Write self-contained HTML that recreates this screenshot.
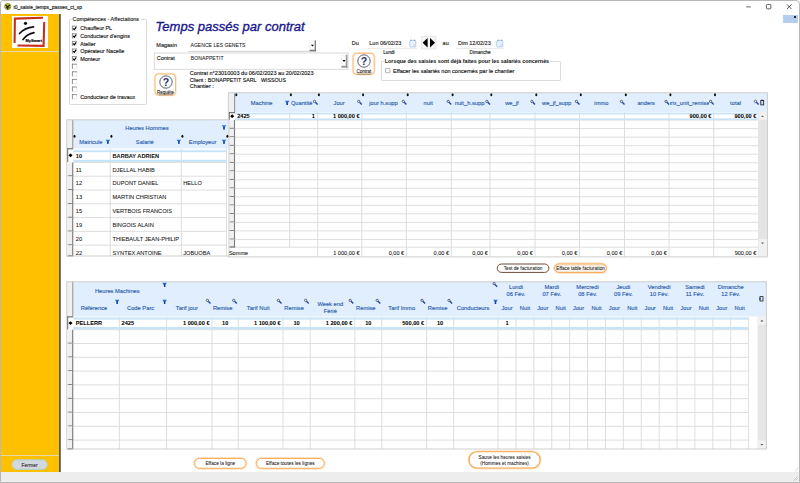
<!DOCTYPE html>
<html lang="fr"><head><meta charset="utf-8"><title>t0_saisie_temps_passes_ct_sp</title>
<style>
html,body{margin:0;padding:0;}
body{width:800px;height:483px;position:relative;overflow:hidden;background:#fff;font-family:"Liberation Sans", sans-serif;}
.b{position:absolute;box-sizing:content-box;}
.t{position:absolute;white-space:nowrap;font-family:"Liberation Sans", sans-serif;-webkit-text-stroke:0.13px;}
#grid{position:absolute;left:0;top:0;}
</style></head><body>
<div class="b" style="left:0px;top:0px;width:800px;height:14px;background:#fff;"></div>
<div class="b" style="left:1px;top:14px;width:58px;height:458px;background:#ffc000;"></div>
<div class="b" style="left:1px;top:51px;width:58px;height:1px;background:#e6d9a8;"></div>
<div class="b" style="left:1px;top:455px;width:58px;height:1px;background:#e6d9a8;"></div>
<div class="b" style="left:0px;top:472px;width:800px;height:11px;background:#ededed;"></div>
<div class="b" style="left:0;top:0;width:798px;height:481px;border:1px solid #b8b8b8;border-radius:3px 4px 0 0;"></div>
<svg id="grid" width="800" height="483" viewBox="0 0 800 483">
<rect x="59.10" y="14.00" width="1.60" height="458.00" fill="#45454d"/>
<rect x="12.0" y="459.8" width="35.2" height="9.6" rx="4.8" fill="#d3d7df" stroke="#9fd6e0" stroke-width="0.8"/>
<rect x="72.00" y="25.80" width="5.00" height="5.00" fill="#fff"/>
<line x1="72.00" y1="30.45" x2="77.00" y2="30.45" stroke="#e2e2e2" stroke-width="0.7"/>
<line x1="76.65" y1="25.80" x2="76.65" y2="30.80" stroke="#e2e2e2" stroke-width="0.7"/>
<line x1="72.00" y1="26.20" x2="77.00" y2="26.20" stroke="#7a7a7a" stroke-width="0.8"/>
<line x1="72.40" y1="25.80" x2="72.40" y2="30.80" stroke="#7a7a7a" stroke-width="0.8"/>
<path d="M73.20 28.30 L74.30 29.60 L76.20 27.10" stroke="#000" stroke-width="1.2" fill="none"/>
<rect x="72.00" y="33.40" width="5.00" height="5.00" fill="#fff"/>
<line x1="72.00" y1="38.05" x2="77.00" y2="38.05" stroke="#e2e2e2" stroke-width="0.7"/>
<line x1="76.65" y1="33.40" x2="76.65" y2="38.40" stroke="#e2e2e2" stroke-width="0.7"/>
<line x1="72.00" y1="33.80" x2="77.00" y2="33.80" stroke="#7a7a7a" stroke-width="0.8"/>
<line x1="72.40" y1="33.40" x2="72.40" y2="38.40" stroke="#7a7a7a" stroke-width="0.8"/>
<path d="M73.20 35.90 L74.30 37.20 L76.20 34.70" stroke="#000" stroke-width="1.2" fill="none"/>
<rect x="72.00" y="41.00" width="5.00" height="5.00" fill="#fff"/>
<line x1="72.00" y1="45.65" x2="77.00" y2="45.65" stroke="#e2e2e2" stroke-width="0.7"/>
<line x1="76.65" y1="41.00" x2="76.65" y2="46.00" stroke="#e2e2e2" stroke-width="0.7"/>
<line x1="72.00" y1="41.40" x2="77.00" y2="41.40" stroke="#7a7a7a" stroke-width="0.8"/>
<line x1="72.40" y1="41.00" x2="72.40" y2="46.00" stroke="#7a7a7a" stroke-width="0.8"/>
<path d="M73.20 43.50 L74.30 44.80 L76.20 42.30" stroke="#000" stroke-width="1.2" fill="none"/>
<rect x="72.00" y="48.60" width="5.00" height="5.00" fill="#fff"/>
<line x1="72.00" y1="53.25" x2="77.00" y2="53.25" stroke="#e2e2e2" stroke-width="0.7"/>
<line x1="76.65" y1="48.60" x2="76.65" y2="53.60" stroke="#e2e2e2" stroke-width="0.7"/>
<line x1="72.00" y1="49.00" x2="77.00" y2="49.00" stroke="#7a7a7a" stroke-width="0.8"/>
<line x1="72.40" y1="48.60" x2="72.40" y2="53.60" stroke="#7a7a7a" stroke-width="0.8"/>
<path d="M73.20 51.10 L74.30 52.40 L76.20 49.90" stroke="#000" stroke-width="1.2" fill="none"/>
<rect x="72.00" y="56.20" width="5.00" height="5.00" fill="#fff"/>
<line x1="72.00" y1="60.85" x2="77.00" y2="60.85" stroke="#e2e2e2" stroke-width="0.7"/>
<line x1="76.65" y1="56.20" x2="76.65" y2="61.20" stroke="#e2e2e2" stroke-width="0.7"/>
<line x1="72.00" y1="56.60" x2="77.00" y2="56.60" stroke="#7a7a7a" stroke-width="0.8"/>
<line x1="72.40" y1="56.20" x2="72.40" y2="61.20" stroke="#7a7a7a" stroke-width="0.8"/>
<path d="M73.20 58.70 L74.30 60.00 L76.20 57.50" stroke="#000" stroke-width="1.2" fill="none"/>
<rect x="72.00" y="63.80" width="5.00" height="5.00" fill="#fff"/>
<line x1="72.00" y1="68.45" x2="77.00" y2="68.45" stroke="#e2e2e2" stroke-width="0.7"/>
<line x1="76.65" y1="63.80" x2="76.65" y2="68.80" stroke="#e2e2e2" stroke-width="0.7"/>
<line x1="72.00" y1="64.20" x2="77.00" y2="64.20" stroke="#7a7a7a" stroke-width="0.8"/>
<line x1="72.40" y1="63.80" x2="72.40" y2="68.80" stroke="#7a7a7a" stroke-width="0.8"/>
<rect x="72.00" y="71.40" width="5.00" height="5.00" fill="#fff"/>
<line x1="72.00" y1="76.05" x2="77.00" y2="76.05" stroke="#e2e2e2" stroke-width="0.7"/>
<line x1="76.65" y1="71.40" x2="76.65" y2="76.40" stroke="#e2e2e2" stroke-width="0.7"/>
<line x1="72.00" y1="71.80" x2="77.00" y2="71.80" stroke="#7a7a7a" stroke-width="0.8"/>
<line x1="72.40" y1="71.40" x2="72.40" y2="76.40" stroke="#7a7a7a" stroke-width="0.8"/>
<rect x="72.00" y="79.00" width="5.00" height="5.00" fill="#fff"/>
<line x1="72.00" y1="83.65" x2="77.00" y2="83.65" stroke="#e2e2e2" stroke-width="0.7"/>
<line x1="76.65" y1="79.00" x2="76.65" y2="84.00" stroke="#e2e2e2" stroke-width="0.7"/>
<line x1="72.00" y1="79.40" x2="77.00" y2="79.40" stroke="#7a7a7a" stroke-width="0.8"/>
<line x1="72.40" y1="79.00" x2="72.40" y2="84.00" stroke="#7a7a7a" stroke-width="0.8"/>
<rect x="72.00" y="86.60" width="5.00" height="5.00" fill="#fff"/>
<line x1="72.00" y1="91.25" x2="77.00" y2="91.25" stroke="#e2e2e2" stroke-width="0.7"/>
<line x1="76.65" y1="86.60" x2="76.65" y2="91.60" stroke="#e2e2e2" stroke-width="0.7"/>
<line x1="72.00" y1="87.00" x2="77.00" y2="87.00" stroke="#7a7a7a" stroke-width="0.8"/>
<line x1="72.40" y1="86.60" x2="72.40" y2="91.60" stroke="#7a7a7a" stroke-width="0.8"/>
<rect x="72.00" y="94.20" width="5.00" height="5.00" fill="#fff"/>
<line x1="72.00" y1="98.85" x2="77.00" y2="98.85" stroke="#e2e2e2" stroke-width="0.7"/>
<line x1="76.65" y1="94.20" x2="76.65" y2="99.20" stroke="#e2e2e2" stroke-width="0.7"/>
<line x1="72.00" y1="94.60" x2="77.00" y2="94.60" stroke="#7a7a7a" stroke-width="0.8"/>
<line x1="72.40" y1="94.20" x2="72.40" y2="99.20" stroke="#7a7a7a" stroke-width="0.8"/>
<line x1="188.00" y1="51.40" x2="316.00" y2="51.40" stroke="#cdcdcd" stroke-width="0.9"/>
<rect x="309.60" y="40.40" width="6.20" height="10.80" fill="#fbfbfb"/>
<line x1="309.60" y1="40.70" x2="315.80" y2="40.70" stroke="#ececec" stroke-width="0.6"/>
<line x1="309.90" y1="40.40" x2="309.90" y2="51.20" stroke="#ececec" stroke-width="0.6"/>
<line x1="309.60" y1="50.70" x2="315.80" y2="50.70" stroke="#4a4a4a" stroke-width="1.0"/>
<line x1="315.35" y1="40.40" x2="315.35" y2="51.20" stroke="#5a5a5a" stroke-width="0.9"/>
<line x1="310.20" y1="49.80" x2="314.90" y2="49.80" stroke="#b8b8b8" stroke-width="0.8"/>
<line x1="314.50" y1="41.00" x2="314.50" y2="50.20" stroke="#c4c4c4" stroke-width="0.7"/>
<path d="M310.90 44.70 H313.90 L312.40 46.60 Z" fill="#000"/>
<rect x="154.30" y="53.00" width="193.70" height="16.30" fill="#fff" stroke="#d6d6d6" stroke-width="0.9"/>
<rect x="341.40" y="54.80" width="5.80" height="12.60" fill="#fbfbfb"/>
<line x1="341.40" y1="55.10" x2="347.20" y2="55.10" stroke="#ececec" stroke-width="0.6"/>
<line x1="341.70" y1="54.80" x2="341.70" y2="67.40" stroke="#ececec" stroke-width="0.6"/>
<line x1="341.40" y1="66.90" x2="347.20" y2="66.90" stroke="#4a4a4a" stroke-width="1.0"/>
<line x1="346.75" y1="54.80" x2="346.75" y2="67.40" stroke="#5a5a5a" stroke-width="0.9"/>
<line x1="342.00" y1="66.00" x2="346.30" y2="66.00" stroke="#b8b8b8" stroke-width="0.8"/>
<line x1="345.90" y1="55.40" x2="345.90" y2="66.40" stroke="#c4c4c4" stroke-width="0.7"/>
<path d="M342.50 60.00 H345.50 L344.00 61.90 Z" fill="#000"/>
<rect x="154.50" y="73.40" width="21.60" height="22.10" rx="3.8" fill="none" stroke="#fde6cc" stroke-width="1.4"/>
<rect x="155.10" y="74.00" width="20.40" height="20.90" rx="3.4" fill="#fffdfb" stroke="#f8ae5c" stroke-width="0.8"/>
<line x1="158.30" y1="94.80" x2="172.90" y2="94.80" stroke="#333" stroke-width="0.45"/>
<rect x="352.60" y="52.80" width="22.20" height="22.00" rx="3.8" fill="none" stroke="#fde6cc" stroke-width="1.4"/>
<rect x="353.20" y="53.40" width="21.00" height="20.80" rx="3.4" fill="#fffdfb" stroke="#f8ae5c" stroke-width="0.8"/>
<line x1="356.70" y1="74.10" x2="371.30" y2="74.10" stroke="#333" stroke-width="0.45"/>
<rect x="385.6" y="68.4" width="4.3" height="4.3" rx="0.6" fill="#fff" stroke="#7e7e7e" stroke-width="0.6"/>
<rect x="228.30" y="92.80" width="539.10" height="164.10" fill="#fff"/>
<rect x="235.00" y="92.80" width="532.40" height="19.40" fill="#e0eefd"/>
<line x1="235.00" y1="120.10" x2="758.60" y2="120.10" stroke="#dadada" stroke-width="0.9"/>
<line x1="235.00" y1="128.62" x2="758.60" y2="128.62" stroke="#dadada" stroke-width="0.9"/>
<line x1="235.00" y1="137.15" x2="758.60" y2="137.15" stroke="#dadada" stroke-width="0.9"/>
<line x1="235.00" y1="145.67" x2="758.60" y2="145.67" stroke="#dadada" stroke-width="0.9"/>
<line x1="235.00" y1="154.19" x2="758.60" y2="154.19" stroke="#dadada" stroke-width="0.9"/>
<line x1="235.00" y1="162.71" x2="758.60" y2="162.71" stroke="#dadada" stroke-width="0.9"/>
<line x1="235.00" y1="171.24" x2="758.60" y2="171.24" stroke="#dadada" stroke-width="0.9"/>
<line x1="235.00" y1="179.76" x2="758.60" y2="179.76" stroke="#dadada" stroke-width="0.9"/>
<line x1="235.00" y1="188.28" x2="758.60" y2="188.28" stroke="#dadada" stroke-width="0.9"/>
<line x1="235.00" y1="196.81" x2="758.60" y2="196.81" stroke="#dadada" stroke-width="0.9"/>
<line x1="235.00" y1="205.33" x2="758.60" y2="205.33" stroke="#dadada" stroke-width="0.9"/>
<line x1="235.00" y1="213.85" x2="758.60" y2="213.85" stroke="#dadada" stroke-width="0.9"/>
<line x1="235.00" y1="222.38" x2="758.60" y2="222.38" stroke="#dadada" stroke-width="0.9"/>
<line x1="235.00" y1="230.90" x2="758.60" y2="230.90" stroke="#dadada" stroke-width="0.9"/>
<line x1="235.00" y1="239.42" x2="758.60" y2="239.42" stroke="#dadada" stroke-width="0.9"/>
<line x1="235.00" y1="247.20" x2="758.60" y2="247.20" stroke="#dadada" stroke-width="0.9"/>
<line x1="289.60" y1="112.20" x2="289.60" y2="247.20" stroke="#dadada" stroke-width="0.9"/>
<line x1="317.60" y1="112.20" x2="317.60" y2="256.90" stroke="#dadada" stroke-width="0.9"/>
<line x1="361.80" y1="112.20" x2="361.80" y2="256.90" stroke="#dadada" stroke-width="0.9"/>
<line x1="406.40" y1="112.20" x2="406.40" y2="256.90" stroke="#dadada" stroke-width="0.9"/>
<line x1="451.30" y1="112.20" x2="451.30" y2="256.90" stroke="#dadada" stroke-width="0.9"/>
<line x1="490.00" y1="112.20" x2="490.00" y2="256.90" stroke="#dadada" stroke-width="0.9"/>
<line x1="535.00" y1="112.20" x2="535.00" y2="256.90" stroke="#dadada" stroke-width="0.9"/>
<line x1="579.50" y1="112.20" x2="579.50" y2="256.90" stroke="#dadada" stroke-width="0.9"/>
<line x1="624.50" y1="112.20" x2="624.50" y2="256.90" stroke="#dadada" stroke-width="0.9"/>
<line x1="669.10" y1="112.20" x2="669.10" y2="256.90" stroke="#dadada" stroke-width="0.9"/>
<line x1="713.70" y1="112.20" x2="713.70" y2="256.90" stroke="#dadada" stroke-width="0.9"/>
<line x1="758.60" y1="112.20" x2="758.60" y2="256.90" stroke="#dadada" stroke-width="0.9"/>
<rect x="235.00" y="112.70" width="523.60" height="1.70" fill="#c6e3f7"/>
<rect x="235.00" y="118.40" width="523.60" height="1.50" fill="#c6e3f7"/>
<rect x="228.30" y="92.80" width="6.70" height="19.40" fill="#f0f0f0"/>
<line x1="234.60" y1="92.80" x2="234.60" y2="112.20" stroke="#858585" stroke-width="0.9"/>
<rect x="228.70" y="112.20" width="6.30" height="7.90" fill="#fff"/>
<line x1="228.70" y1="112.70" x2="235.00" y2="112.70" stroke="#555" stroke-width="1"/>
<line x1="229.20" y1="112.20" x2="229.20" y2="120.10" stroke="#555" stroke-width="1"/>
<path d="M230.05 116.15 L232.15 114.25 L234.25 116.15 L232.15 118.05 Z" fill="#000"/>
<rect x="228.70" y="120.10" width="6.30" height="8.52" fill="#f0f0f0"/>
<line x1="228.70" y1="128.42" x2="235.00" y2="128.42" stroke="#6a6a6a" stroke-width="1.2"/>
<line x1="234.50" y1="120.10" x2="234.50" y2="128.62" stroke="#7a7a7a" stroke-width="1.1"/>
<line x1="229.10" y1="120.10" x2="229.10" y2="128.62" stroke="#fff" stroke-width="0.8"/>
<rect x="228.70" y="128.62" width="6.30" height="8.52" fill="#f0f0f0"/>
<line x1="228.70" y1="136.95" x2="235.00" y2="136.95" stroke="#6a6a6a" stroke-width="1.2"/>
<line x1="234.50" y1="128.62" x2="234.50" y2="137.15" stroke="#7a7a7a" stroke-width="1.1"/>
<line x1="229.10" y1="128.62" x2="229.10" y2="137.15" stroke="#fff" stroke-width="0.8"/>
<rect x="228.70" y="137.15" width="6.30" height="8.52" fill="#f0f0f0"/>
<line x1="228.70" y1="145.47" x2="235.00" y2="145.47" stroke="#6a6a6a" stroke-width="1.2"/>
<line x1="234.50" y1="137.15" x2="234.50" y2="145.67" stroke="#7a7a7a" stroke-width="1.1"/>
<line x1="229.10" y1="137.15" x2="229.10" y2="145.67" stroke="#fff" stroke-width="0.8"/>
<rect x="228.70" y="145.67" width="6.30" height="8.52" fill="#f0f0f0"/>
<line x1="228.70" y1="153.99" x2="235.00" y2="153.99" stroke="#6a6a6a" stroke-width="1.2"/>
<line x1="234.50" y1="145.67" x2="234.50" y2="154.19" stroke="#7a7a7a" stroke-width="1.1"/>
<line x1="229.10" y1="145.67" x2="229.10" y2="154.19" stroke="#fff" stroke-width="0.8"/>
<rect x="228.70" y="154.19" width="6.30" height="8.52" fill="#f0f0f0"/>
<line x1="228.70" y1="162.51" x2="235.00" y2="162.51" stroke="#6a6a6a" stroke-width="1.2"/>
<line x1="234.50" y1="154.19" x2="234.50" y2="162.71" stroke="#7a7a7a" stroke-width="1.1"/>
<line x1="229.10" y1="154.19" x2="229.10" y2="162.71" stroke="#fff" stroke-width="0.8"/>
<rect x="228.70" y="162.71" width="6.30" height="8.52" fill="#f0f0f0"/>
<line x1="228.70" y1="171.04" x2="235.00" y2="171.04" stroke="#6a6a6a" stroke-width="1.2"/>
<line x1="234.50" y1="162.71" x2="234.50" y2="171.24" stroke="#7a7a7a" stroke-width="1.1"/>
<line x1="229.10" y1="162.71" x2="229.10" y2="171.24" stroke="#fff" stroke-width="0.8"/>
<rect x="228.70" y="171.24" width="6.30" height="8.52" fill="#f0f0f0"/>
<line x1="228.70" y1="179.56" x2="235.00" y2="179.56" stroke="#6a6a6a" stroke-width="1.2"/>
<line x1="234.50" y1="171.24" x2="234.50" y2="179.76" stroke="#7a7a7a" stroke-width="1.1"/>
<line x1="229.10" y1="171.24" x2="229.10" y2="179.76" stroke="#fff" stroke-width="0.8"/>
<rect x="228.70" y="179.76" width="6.30" height="8.52" fill="#f0f0f0"/>
<line x1="228.70" y1="188.08" x2="235.00" y2="188.08" stroke="#6a6a6a" stroke-width="1.2"/>
<line x1="234.50" y1="179.76" x2="234.50" y2="188.28" stroke="#7a7a7a" stroke-width="1.1"/>
<line x1="229.10" y1="179.76" x2="229.10" y2="188.28" stroke="#fff" stroke-width="0.8"/>
<rect x="228.70" y="188.28" width="6.30" height="8.52" fill="#f0f0f0"/>
<line x1="228.70" y1="196.61" x2="235.00" y2="196.61" stroke="#6a6a6a" stroke-width="1.2"/>
<line x1="234.50" y1="188.28" x2="234.50" y2="196.81" stroke="#7a7a7a" stroke-width="1.1"/>
<line x1="229.10" y1="188.28" x2="229.10" y2="196.81" stroke="#fff" stroke-width="0.8"/>
<rect x="228.70" y="196.81" width="6.30" height="8.52" fill="#f0f0f0"/>
<line x1="228.70" y1="205.13" x2="235.00" y2="205.13" stroke="#6a6a6a" stroke-width="1.2"/>
<line x1="234.50" y1="196.81" x2="234.50" y2="205.33" stroke="#7a7a7a" stroke-width="1.1"/>
<line x1="229.10" y1="196.81" x2="229.10" y2="205.33" stroke="#fff" stroke-width="0.8"/>
<rect x="228.70" y="205.33" width="6.30" height="8.52" fill="#f0f0f0"/>
<line x1="228.70" y1="213.65" x2="235.00" y2="213.65" stroke="#6a6a6a" stroke-width="1.2"/>
<line x1="234.50" y1="205.33" x2="234.50" y2="213.85" stroke="#7a7a7a" stroke-width="1.1"/>
<line x1="229.10" y1="205.33" x2="229.10" y2="213.85" stroke="#fff" stroke-width="0.8"/>
<rect x="228.70" y="213.85" width="6.30" height="8.52" fill="#f0f0f0"/>
<line x1="228.70" y1="222.18" x2="235.00" y2="222.18" stroke="#6a6a6a" stroke-width="1.2"/>
<line x1="234.50" y1="213.85" x2="234.50" y2="222.38" stroke="#7a7a7a" stroke-width="1.1"/>
<line x1="229.10" y1="213.85" x2="229.10" y2="222.38" stroke="#fff" stroke-width="0.8"/>
<rect x="228.70" y="222.38" width="6.30" height="8.52" fill="#f0f0f0"/>
<line x1="228.70" y1="230.70" x2="235.00" y2="230.70" stroke="#6a6a6a" stroke-width="1.2"/>
<line x1="234.50" y1="222.38" x2="234.50" y2="230.90" stroke="#7a7a7a" stroke-width="1.1"/>
<line x1="229.10" y1="222.38" x2="229.10" y2="230.90" stroke="#fff" stroke-width="0.8"/>
<rect x="228.70" y="230.90" width="6.30" height="8.52" fill="#f0f0f0"/>
<line x1="228.70" y1="239.22" x2="235.00" y2="239.22" stroke="#6a6a6a" stroke-width="1.2"/>
<line x1="234.50" y1="230.90" x2="234.50" y2="239.42" stroke="#7a7a7a" stroke-width="1.1"/>
<line x1="229.10" y1="230.90" x2="229.10" y2="239.42" stroke="#fff" stroke-width="0.8"/>
<rect x="228.70" y="239.42" width="6.30" height="7.78" fill="#f0f0f0"/>
<line x1="228.70" y1="247.00" x2="235.00" y2="247.00" stroke="#6a6a6a" stroke-width="1.2"/>
<line x1="234.50" y1="239.42" x2="234.50" y2="247.20" stroke="#7a7a7a" stroke-width="1.1"/>
<line x1="229.10" y1="239.42" x2="229.10" y2="247.20" stroke="#fff" stroke-width="0.8"/>
<rect x="758.60" y="112.20" width="8.80" height="144.70" fill="#f1f1f1"/>
<rect x="758.60" y="112.20" width="8.80" height="127.00" fill="#e4e4e4"/>
<rect x="758.60" y="112.20" width="8.80" height="8.00" fill="#f1f1f1"/>
<rect x="758.60" y="239.20" width="8.80" height="8.00" fill="#f1f1f1"/>
<path d="M761.00 117.00 L762.50 115.40 L764.00 117.00 Z" fill="#666"/>
<path d="M761.00 242.60 L762.50 244.20 L764.00 242.60 Z" fill="#666"/>
<rect x="228.30" y="92.80" width="539.10" height="164.10" fill="none" stroke="#c9c9c9" stroke-width="0.9"/>
<ellipse cx="236.30" cy="94.80" rx="1.5" ry="2.0" fill="#fff" opacity="0.55"/>
<ellipse cx="236.30" cy="94.80" rx="1.05" ry="1.55" fill="#111"/>
<path d="M284.90 100.80 H289.50 L287.85 103.00 V105.00 H286.55 V103.00 Z" fill="#2270dc"/>
<path d="M286.20 102.40 H288.20 L287.85 103.00 V105.00 H286.55 V103.00 Z" fill="#123c94"/>
<ellipse cx="290.90" cy="94.80" rx="1.5" ry="2.0" fill="#fff" opacity="0.55"/>
<ellipse cx="290.90" cy="94.80" rx="1.05" ry="1.55" fill="#111"/>
<circle cx="314.50" cy="101.40" r="1.15" fill="#eef4ff" stroke="#333a4a" stroke-width="0.75"/>
<line x1="315.40" y1="102.30" x2="317.60" y2="104.50" stroke="#2443b8" stroke-width="1.4"/>
<ellipse cx="318.90" cy="94.80" rx="1.5" ry="2.0" fill="#fff" opacity="0.55"/>
<ellipse cx="318.90" cy="94.80" rx="1.05" ry="1.55" fill="#111"/>
<circle cx="358.70" cy="101.40" r="1.15" fill="#eef4ff" stroke="#333a4a" stroke-width="0.75"/>
<line x1="359.60" y1="102.30" x2="361.80" y2="104.50" stroke="#2443b8" stroke-width="1.4"/>
<ellipse cx="363.10" cy="94.80" rx="1.5" ry="2.0" fill="#fff" opacity="0.55"/>
<ellipse cx="363.10" cy="94.80" rx="1.05" ry="1.55" fill="#111"/>
<circle cx="403.30" cy="101.40" r="1.15" fill="#eef4ff" stroke="#333a4a" stroke-width="0.75"/>
<line x1="404.20" y1="102.30" x2="406.40" y2="104.50" stroke="#2443b8" stroke-width="1.4"/>
<ellipse cx="407.70" cy="94.80" rx="1.5" ry="2.0" fill="#fff" opacity="0.55"/>
<ellipse cx="407.70" cy="94.80" rx="1.05" ry="1.55" fill="#111"/>
<circle cx="448.20" cy="101.40" r="1.15" fill="#eef4ff" stroke="#333a4a" stroke-width="0.75"/>
<line x1="449.10" y1="102.30" x2="451.30" y2="104.50" stroke="#2443b8" stroke-width="1.4"/>
<ellipse cx="452.60" cy="94.80" rx="1.5" ry="2.0" fill="#fff" opacity="0.55"/>
<ellipse cx="452.60" cy="94.80" rx="1.05" ry="1.55" fill="#111"/>
<circle cx="486.90" cy="101.40" r="1.15" fill="#eef4ff" stroke="#333a4a" stroke-width="0.75"/>
<line x1="487.80" y1="102.30" x2="490.00" y2="104.50" stroke="#2443b8" stroke-width="1.4"/>
<ellipse cx="491.30" cy="94.80" rx="1.5" ry="2.0" fill="#fff" opacity="0.55"/>
<ellipse cx="491.30" cy="94.80" rx="1.05" ry="1.55" fill="#111"/>
<circle cx="531.90" cy="101.40" r="1.15" fill="#eef4ff" stroke="#333a4a" stroke-width="0.75"/>
<line x1="532.80" y1="102.30" x2="535.00" y2="104.50" stroke="#2443b8" stroke-width="1.4"/>
<ellipse cx="536.30" cy="94.80" rx="1.5" ry="2.0" fill="#fff" opacity="0.55"/>
<ellipse cx="536.30" cy="94.80" rx="1.05" ry="1.55" fill="#111"/>
<circle cx="576.40" cy="101.40" r="1.15" fill="#eef4ff" stroke="#333a4a" stroke-width="0.75"/>
<line x1="577.30" y1="102.30" x2="579.50" y2="104.50" stroke="#2443b8" stroke-width="1.4"/>
<ellipse cx="580.80" cy="94.80" rx="1.5" ry="2.0" fill="#fff" opacity="0.55"/>
<ellipse cx="580.80" cy="94.80" rx="1.05" ry="1.55" fill="#111"/>
<circle cx="621.40" cy="101.40" r="1.15" fill="#eef4ff" stroke="#333a4a" stroke-width="0.75"/>
<line x1="622.30" y1="102.30" x2="624.50" y2="104.50" stroke="#2443b8" stroke-width="1.4"/>
<ellipse cx="625.80" cy="94.80" rx="1.5" ry="2.0" fill="#fff" opacity="0.55"/>
<ellipse cx="625.80" cy="94.80" rx="1.05" ry="1.55" fill="#111"/>
<circle cx="666.00" cy="101.40" r="1.15" fill="#eef4ff" stroke="#333a4a" stroke-width="0.75"/>
<line x1="666.90" y1="102.30" x2="669.10" y2="104.50" stroke="#2443b8" stroke-width="1.4"/>
<ellipse cx="670.40" cy="94.80" rx="1.5" ry="2.0" fill="#fff" opacity="0.55"/>
<ellipse cx="670.40" cy="94.80" rx="1.05" ry="1.55" fill="#111"/>
<circle cx="710.60" cy="101.40" r="1.15" fill="#eef4ff" stroke="#333a4a" stroke-width="0.75"/>
<line x1="711.50" y1="102.30" x2="713.70" y2="104.50" stroke="#2443b8" stroke-width="1.4"/>
<ellipse cx="715.00" cy="94.80" rx="1.5" ry="2.0" fill="#fff" opacity="0.55"/>
<ellipse cx="715.00" cy="94.80" rx="1.05" ry="1.55" fill="#111"/>
<circle cx="755.50" cy="101.40" r="1.15" fill="#eef4ff" stroke="#333a4a" stroke-width="0.75"/>
<line x1="756.40" y1="102.30" x2="758.60" y2="104.50" stroke="#2443b8" stroke-width="1.4"/>
<rect x="760.8" y="100.5" width="2.9" height="4.4" fill="#cfdcf0" stroke="#1a1a2a" stroke-width="0.8"/>
<rect x="761.5" y="99.7" width="1.5" height="1.0" fill="#1a1a2a"/>
<rect x="66.80" y="119.80" width="162.20" height="136.20" fill="#fff"/>
<rect x="73.20" y="119.80" width="155.80" height="28.50" fill="#e0eefd"/>
<line x1="73.20" y1="162.40" x2="226.50" y2="162.40" stroke="#dadada" stroke-width="0.9"/>
<line x1="73.20" y1="176.20" x2="226.50" y2="176.20" stroke="#dadada" stroke-width="0.9"/>
<line x1="73.20" y1="190.00" x2="226.50" y2="190.00" stroke="#dadada" stroke-width="0.9"/>
<line x1="73.20" y1="203.80" x2="226.50" y2="203.80" stroke="#dadada" stroke-width="0.9"/>
<line x1="73.20" y1="217.60" x2="226.50" y2="217.60" stroke="#dadada" stroke-width="0.9"/>
<line x1="73.20" y1="231.40" x2="226.50" y2="231.40" stroke="#dadada" stroke-width="0.9"/>
<line x1="73.20" y1="245.20" x2="226.50" y2="245.20" stroke="#dadada" stroke-width="0.9"/>
<line x1="110.30" y1="148.30" x2="110.30" y2="256.00" stroke="#dadada" stroke-width="0.9"/>
<line x1="181.30" y1="148.30" x2="181.30" y2="256.00" stroke="#dadada" stroke-width="0.9"/>
<line x1="226.50" y1="148.30" x2="226.50" y2="256.00" stroke="#dadada" stroke-width="0.9"/>
<rect x="73.20" y="149.60" width="153.30" height="1.00" fill="#ddeefa"/>
<rect x="73.20" y="150.60" width="153.30" height="1.60" fill="#c2e1f6"/>
<rect x="73.20" y="159.80" width="153.30" height="2.20" fill="#c6e3f7"/>
<rect x="66.80" y="119.80" width="6.40" height="28.50" fill="#f0f0f0"/>
<line x1="72.80" y1="119.80" x2="72.80" y2="148.30" stroke="#858585" stroke-width="0.9"/>
<rect x="67.20" y="148.30" width="6.00" height="14.10" fill="#fff"/>
<line x1="67.20" y1="148.80" x2="73.20" y2="148.80" stroke="#555" stroke-width="1"/>
<line x1="67.70" y1="148.30" x2="67.70" y2="162.40" stroke="#555" stroke-width="1"/>
<path d="M68.40 155.35 L70.50 153.45 L72.60 155.35 L70.50 157.25 Z" fill="#000"/>
<rect x="67.20" y="162.40" width="6.00" height="13.80" fill="#f0f0f0"/>
<line x1="67.20" y1="176.00" x2="73.20" y2="176.00" stroke="#6a6a6a" stroke-width="1.2"/>
<line x1="72.70" y1="162.40" x2="72.70" y2="176.20" stroke="#7a7a7a" stroke-width="1.1"/>
<line x1="67.60" y1="162.40" x2="67.60" y2="176.20" stroke="#fff" stroke-width="0.8"/>
<rect x="67.20" y="176.20" width="6.00" height="13.80" fill="#f0f0f0"/>
<line x1="67.20" y1="189.80" x2="73.20" y2="189.80" stroke="#6a6a6a" stroke-width="1.2"/>
<line x1="72.70" y1="176.20" x2="72.70" y2="190.00" stroke="#7a7a7a" stroke-width="1.1"/>
<line x1="67.60" y1="176.20" x2="67.60" y2="190.00" stroke="#fff" stroke-width="0.8"/>
<rect x="67.20" y="190.00" width="6.00" height="13.80" fill="#f0f0f0"/>
<line x1="67.20" y1="203.60" x2="73.20" y2="203.60" stroke="#6a6a6a" stroke-width="1.2"/>
<line x1="72.70" y1="190.00" x2="72.70" y2="203.80" stroke="#7a7a7a" stroke-width="1.1"/>
<line x1="67.60" y1="190.00" x2="67.60" y2="203.80" stroke="#fff" stroke-width="0.8"/>
<rect x="67.20" y="203.80" width="6.00" height="13.80" fill="#f0f0f0"/>
<line x1="67.20" y1="217.40" x2="73.20" y2="217.40" stroke="#6a6a6a" stroke-width="1.2"/>
<line x1="72.70" y1="203.80" x2="72.70" y2="217.60" stroke="#7a7a7a" stroke-width="1.1"/>
<line x1="67.60" y1="203.80" x2="67.60" y2="217.60" stroke="#fff" stroke-width="0.8"/>
<rect x="67.20" y="217.60" width="6.00" height="13.80" fill="#f0f0f0"/>
<line x1="67.20" y1="231.20" x2="73.20" y2="231.20" stroke="#6a6a6a" stroke-width="1.2"/>
<line x1="72.70" y1="217.60" x2="72.70" y2="231.40" stroke="#7a7a7a" stroke-width="1.1"/>
<line x1="67.60" y1="217.60" x2="67.60" y2="231.40" stroke="#fff" stroke-width="0.8"/>
<rect x="67.20" y="231.40" width="6.00" height="13.80" fill="#f0f0f0"/>
<line x1="67.20" y1="245.00" x2="73.20" y2="245.00" stroke="#6a6a6a" stroke-width="1.2"/>
<line x1="72.70" y1="231.40" x2="72.70" y2="245.20" stroke="#7a7a7a" stroke-width="1.1"/>
<line x1="67.60" y1="231.40" x2="67.60" y2="245.20" stroke="#fff" stroke-width="0.8"/>
<rect x="67.20" y="245.20" width="6.00" height="10.80" fill="#f0f0f0"/>
<line x1="67.20" y1="255.80" x2="73.20" y2="255.80" stroke="#6a6a6a" stroke-width="1.2"/>
<line x1="72.70" y1="245.20" x2="72.70" y2="256.00" stroke="#7a7a7a" stroke-width="1.1"/>
<line x1="67.60" y1="245.20" x2="67.60" y2="256.00" stroke="#fff" stroke-width="0.8"/>
<rect x="66.80" y="119.80" width="162.20" height="136.20" fill="none" stroke="#c9c9c9" stroke-width="0.9"/>
<path d="M221.70 125.30 H226.30 L224.65 127.50 V129.50 H223.35 V127.50 Z" fill="#2270dc"/>
<path d="M223.00 126.90 H225.00 L224.65 127.50 V129.50 H223.35 V127.50 Z" fill="#123c94"/>
<path d="M105.55 139.65 H110.15 L108.50 141.85 V143.85 H107.20 V141.85 Z" fill="#2270dc"/>
<path d="M106.85 141.25 H108.85 L108.50 141.85 V143.85 H107.20 V141.85 Z" fill="#123c94"/>
<path d="M176.55 139.65 H181.15 L179.50 141.85 V143.85 H178.20 V141.85 Z" fill="#2270dc"/>
<path d="M177.85 141.25 H179.85 L179.50 141.85 V143.85 H178.20 V141.85 Z" fill="#123c94"/>
<path d="M221.70 139.65 H226.30 L224.65 141.85 V143.85 H223.35 V141.85 Z" fill="#2270dc"/>
<path d="M223.00 141.25 H225.00 L224.65 141.85 V143.85 H223.35 V141.85 Z" fill="#123c94"/>
<ellipse cx="74.50" cy="136.20" rx="1.5" ry="2.0" fill="#fff" opacity="0.55"/>
<ellipse cx="74.50" cy="136.20" rx="1.05" ry="1.55" fill="#111"/>
<ellipse cx="111.40" cy="136.20" rx="1.5" ry="2.0" fill="#fff" opacity="0.55"/>
<ellipse cx="111.40" cy="136.20" rx="1.05" ry="1.55" fill="#111"/>
<ellipse cx="182.40" cy="136.20" rx="1.5" ry="2.0" fill="#fff" opacity="0.55"/>
<ellipse cx="182.40" cy="136.20" rx="1.05" ry="1.55" fill="#111"/>
<ellipse cx="227.40" cy="136.20" rx="1.5" ry="2.0" fill="#fff" opacity="0.55"/>
<ellipse cx="227.40" cy="136.20" rx="1.05" ry="1.55" fill="#111"/>
<rect x="497.30" y="264.00" width="51.60" height="8.40" rx="4.20" fill="#fff" stroke="#6b4a38" stroke-width="1.0"/>
<rect x="553.90" y="263.20" width="53.20" height="10.00" rx="5.00" fill="none" stroke="#fde4c8" stroke-width="1.4"/>
<rect x="554.65" y="263.95" width="51.70" height="8.50" rx="4.25" fill="#fff8ee" stroke="#f7a040" stroke-width="0.9"/>
<rect x="556.6" y="265.3" width="47.8" height="5.8" fill="none" stroke="#a89888" stroke-width="0.4" stroke-dasharray="0.6 0.6"/>
<rect x="193.90" y="457.70" width="52.80" height="11.30" rx="5.65" fill="none" stroke="#fde4c8" stroke-width="1.4"/>
<rect x="194.65" y="458.45" width="51.30" height="9.80" rx="4.90" fill="#fff" stroke="#f7a040" stroke-width="0.9"/>
<rect x="255.70" y="457.70" width="69.20" height="11.30" rx="5.65" fill="none" stroke="#fde4c8" stroke-width="1.4"/>
<rect x="256.45" y="458.45" width="67.70" height="9.80" rx="4.90" fill="#fff" stroke="#f7a040" stroke-width="0.9"/>
<rect x="468.20" y="450.90" width="72.80" height="17.90" rx="8.95" fill="none" stroke="#fde4c8" stroke-width="1.4"/>
<rect x="469.05" y="451.75" width="71.10" height="16.20" rx="8.10" fill="#fff" stroke="#f7a040" stroke-width="1.1"/>
<rect x="66.80" y="281.80" width="699.50" height="167.20" fill="#fff"/>
<rect x="73.20" y="281.80" width="693.10" height="34.60" fill="#e0eefd"/>
<line x1="73.20" y1="329.70" x2="748.60" y2="329.70" stroke="#dadada" stroke-width="0.9"/>
<line x1="73.20" y1="343.50" x2="748.60" y2="343.50" stroke="#dadada" stroke-width="0.9"/>
<line x1="73.20" y1="357.30" x2="748.60" y2="357.30" stroke="#dadada" stroke-width="0.9"/>
<line x1="73.20" y1="371.10" x2="748.60" y2="371.10" stroke="#dadada" stroke-width="0.9"/>
<line x1="73.20" y1="384.90" x2="748.60" y2="384.90" stroke="#dadada" stroke-width="0.9"/>
<line x1="73.20" y1="398.70" x2="748.60" y2="398.70" stroke="#dadada" stroke-width="0.9"/>
<line x1="73.20" y1="412.50" x2="748.60" y2="412.50" stroke="#dadada" stroke-width="0.9"/>
<line x1="73.20" y1="426.30" x2="748.60" y2="426.30" stroke="#dadada" stroke-width="0.9"/>
<line x1="73.20" y1="440.10" x2="748.60" y2="440.10" stroke="#dadada" stroke-width="0.9"/>
<line x1="119.40" y1="316.40" x2="119.40" y2="449.00" stroke="#dadada" stroke-width="0.9"/>
<line x1="166.60" y1="316.40" x2="166.60" y2="449.00" stroke="#dadada" stroke-width="0.9"/>
<line x1="212.00" y1="316.40" x2="212.00" y2="449.00" stroke="#dadada" stroke-width="0.9"/>
<line x1="238.30" y1="316.40" x2="238.30" y2="449.00" stroke="#dadada" stroke-width="0.9"/>
<line x1="283.00" y1="316.40" x2="283.00" y2="449.00" stroke="#dadada" stroke-width="0.9"/>
<line x1="310.20" y1="316.40" x2="310.20" y2="449.00" stroke="#dadada" stroke-width="0.9"/>
<line x1="354.80" y1="316.40" x2="354.80" y2="449.00" stroke="#dadada" stroke-width="0.9"/>
<line x1="381.80" y1="316.40" x2="381.80" y2="449.00" stroke="#dadada" stroke-width="0.9"/>
<line x1="426.60" y1="316.40" x2="426.60" y2="449.00" stroke="#dadada" stroke-width="0.9"/>
<line x1="453.60" y1="316.40" x2="453.60" y2="449.00" stroke="#dadada" stroke-width="0.9"/>
<line x1="498.10" y1="316.40" x2="498.10" y2="449.00" stroke="#dadada" stroke-width="0.9"/>
<line x1="515.99" y1="316.40" x2="515.99" y2="449.00" stroke="#dadada" stroke-width="0.9"/>
<line x1="533.89" y1="316.40" x2="533.89" y2="449.00" stroke="#dadada" stroke-width="0.9"/>
<line x1="551.78" y1="316.40" x2="551.78" y2="449.00" stroke="#dadada" stroke-width="0.9"/>
<line x1="569.67" y1="316.40" x2="569.67" y2="449.00" stroke="#dadada" stroke-width="0.9"/>
<line x1="587.56" y1="316.40" x2="587.56" y2="449.00" stroke="#dadada" stroke-width="0.9"/>
<line x1="605.46" y1="316.40" x2="605.46" y2="449.00" stroke="#dadada" stroke-width="0.9"/>
<line x1="623.35" y1="316.40" x2="623.35" y2="449.00" stroke="#dadada" stroke-width="0.9"/>
<line x1="641.24" y1="316.40" x2="641.24" y2="449.00" stroke="#dadada" stroke-width="0.9"/>
<line x1="659.14" y1="316.40" x2="659.14" y2="449.00" stroke="#dadada" stroke-width="0.9"/>
<line x1="677.03" y1="316.40" x2="677.03" y2="449.00" stroke="#dadada" stroke-width="0.9"/>
<line x1="694.92" y1="316.40" x2="694.92" y2="449.00" stroke="#dadada" stroke-width="0.9"/>
<line x1="712.81" y1="316.40" x2="712.81" y2="449.00" stroke="#dadada" stroke-width="0.9"/>
<line x1="730.71" y1="316.40" x2="730.71" y2="449.00" stroke="#dadada" stroke-width="0.9"/>
<line x1="748.60" y1="316.40" x2="748.60" y2="449.00" stroke="#dadada" stroke-width="0.9"/>
<rect x="73.20" y="317.00" width="675.40" height="1.20" fill="#ddeefa"/>
<rect x="73.20" y="318.20" width="675.40" height="1.40" fill="#c2e1f6"/>
<rect x="73.20" y="327.00" width="675.40" height="2.30" fill="#c6e3f7"/>
<rect x="66.80" y="281.80" width="6.40" height="34.60" fill="#f0f0f0"/>
<line x1="72.80" y1="281.80" x2="72.80" y2="316.40" stroke="#858585" stroke-width="0.9"/>
<rect x="67.20" y="316.40" width="6.00" height="13.30" fill="#fff"/>
<line x1="67.20" y1="316.90" x2="73.20" y2="316.90" stroke="#555" stroke-width="1"/>
<line x1="67.70" y1="316.40" x2="67.70" y2="329.70" stroke="#555" stroke-width="1"/>
<path d="M68.40 323.05 L70.50 321.15 L72.60 323.05 L70.50 324.95 Z" fill="#000"/>
<rect x="67.20" y="329.70" width="6.00" height="13.80" fill="#f0f0f0"/>
<line x1="67.20" y1="343.30" x2="73.20" y2="343.30" stroke="#6a6a6a" stroke-width="1.2"/>
<line x1="72.70" y1="329.70" x2="72.70" y2="343.50" stroke="#7a7a7a" stroke-width="1.1"/>
<line x1="67.60" y1="329.70" x2="67.60" y2="343.50" stroke="#fff" stroke-width="0.8"/>
<rect x="67.20" y="343.50" width="6.00" height="13.80" fill="#f0f0f0"/>
<line x1="67.20" y1="357.10" x2="73.20" y2="357.10" stroke="#6a6a6a" stroke-width="1.2"/>
<line x1="72.70" y1="343.50" x2="72.70" y2="357.30" stroke="#7a7a7a" stroke-width="1.1"/>
<line x1="67.60" y1="343.50" x2="67.60" y2="357.30" stroke="#fff" stroke-width="0.8"/>
<rect x="67.20" y="357.30" width="6.00" height="13.80" fill="#f0f0f0"/>
<line x1="67.20" y1="370.90" x2="73.20" y2="370.90" stroke="#6a6a6a" stroke-width="1.2"/>
<line x1="72.70" y1="357.30" x2="72.70" y2="371.10" stroke="#7a7a7a" stroke-width="1.1"/>
<line x1="67.60" y1="357.30" x2="67.60" y2="371.10" stroke="#fff" stroke-width="0.8"/>
<rect x="67.20" y="371.10" width="6.00" height="13.80" fill="#f0f0f0"/>
<line x1="67.20" y1="384.70" x2="73.20" y2="384.70" stroke="#6a6a6a" stroke-width="1.2"/>
<line x1="72.70" y1="371.10" x2="72.70" y2="384.90" stroke="#7a7a7a" stroke-width="1.1"/>
<line x1="67.60" y1="371.10" x2="67.60" y2="384.90" stroke="#fff" stroke-width="0.8"/>
<rect x="67.20" y="384.90" width="6.00" height="13.80" fill="#f0f0f0"/>
<line x1="67.20" y1="398.50" x2="73.20" y2="398.50" stroke="#6a6a6a" stroke-width="1.2"/>
<line x1="72.70" y1="384.90" x2="72.70" y2="398.70" stroke="#7a7a7a" stroke-width="1.1"/>
<line x1="67.60" y1="384.90" x2="67.60" y2="398.70" stroke="#fff" stroke-width="0.8"/>
<rect x="67.20" y="398.70" width="6.00" height="13.80" fill="#f0f0f0"/>
<line x1="67.20" y1="412.30" x2="73.20" y2="412.30" stroke="#6a6a6a" stroke-width="1.2"/>
<line x1="72.70" y1="398.70" x2="72.70" y2="412.50" stroke="#7a7a7a" stroke-width="1.1"/>
<line x1="67.60" y1="398.70" x2="67.60" y2="412.50" stroke="#fff" stroke-width="0.8"/>
<rect x="67.20" y="412.50" width="6.00" height="13.80" fill="#f0f0f0"/>
<line x1="67.20" y1="426.10" x2="73.20" y2="426.10" stroke="#6a6a6a" stroke-width="1.2"/>
<line x1="72.70" y1="412.50" x2="72.70" y2="426.30" stroke="#7a7a7a" stroke-width="1.1"/>
<line x1="67.60" y1="412.50" x2="67.60" y2="426.30" stroke="#fff" stroke-width="0.8"/>
<rect x="67.20" y="426.30" width="6.00" height="13.80" fill="#f0f0f0"/>
<line x1="67.20" y1="439.90" x2="73.20" y2="439.90" stroke="#6a6a6a" stroke-width="1.2"/>
<line x1="72.70" y1="426.30" x2="72.70" y2="440.10" stroke="#7a7a7a" stroke-width="1.1"/>
<line x1="67.60" y1="426.30" x2="67.60" y2="440.10" stroke="#fff" stroke-width="0.8"/>
<rect x="67.20" y="440.10" width="6.00" height="8.90" fill="#f0f0f0"/>
<line x1="67.20" y1="448.80" x2="73.20" y2="448.80" stroke="#6a6a6a" stroke-width="1.2"/>
<line x1="72.70" y1="440.10" x2="72.70" y2="449.00" stroke="#7a7a7a" stroke-width="1.1"/>
<line x1="67.60" y1="440.10" x2="67.60" y2="449.00" stroke="#fff" stroke-width="0.8"/>
<rect x="757.60" y="316.40" width="8.70" height="132.60" fill="#e6e6e6"/>
<rect x="757.60" y="316.40" width="8.70" height="8.50" fill="#f1f1f1"/>
<rect x="757.60" y="440.50" width="8.70" height="8.50" fill="#f1f1f1"/>
<path d="M760.40 321.40 L761.90 319.80 L763.40 321.40 Z" fill="#555"/>
<path d="M760.40 444.00 L761.90 445.60 L763.40 444.00 Z" fill="#555"/>
<rect x="66.80" y="281.80" width="699.50" height="167.20" fill="none" stroke="#c9c9c9" stroke-width="0.9"/>
<path d="M162.30 282.70 H166.90 L165.25 284.90 V286.90 H163.95 V284.90 Z" fill="#2270dc"/>
<path d="M163.60 284.30 H165.60 L165.25 284.90 V286.90 H163.95 V284.90 Z" fill="#123c94"/>
<path d="M114.90 299.70 H119.50 L117.85 301.90 V303.90 H116.55 V301.90 Z" fill="#2270dc"/>
<path d="M116.20 301.30 H118.20 L117.85 301.90 V303.90 H116.55 V301.90 Z" fill="#123c94"/>
<path d="M162.30 299.70 H166.90 L165.25 301.90 V303.90 H163.95 V301.90 Z" fill="#2270dc"/>
<path d="M163.60 301.30 H165.60 L165.25 301.90 V303.90 H163.95 V301.90 Z" fill="#123c94"/>
<circle cx="207.40" cy="300.40" r="1.15" fill="#eef4ff" stroke="#333a4a" stroke-width="0.75"/>
<line x1="208.30" y1="301.30" x2="210.50" y2="303.50" stroke="#2443b8" stroke-width="1.4"/>
<circle cx="233.70" cy="300.40" r="1.15" fill="#eef4ff" stroke="#333a4a" stroke-width="0.75"/>
<line x1="234.60" y1="301.30" x2="236.80" y2="303.50" stroke="#2443b8" stroke-width="1.4"/>
<circle cx="278.40" cy="300.40" r="1.15" fill="#eef4ff" stroke="#333a4a" stroke-width="0.75"/>
<line x1="279.30" y1="301.30" x2="281.50" y2="303.50" stroke="#2443b8" stroke-width="1.4"/>
<circle cx="305.60" cy="300.40" r="1.15" fill="#eef4ff" stroke="#333a4a" stroke-width="0.75"/>
<line x1="306.50" y1="301.30" x2="308.70" y2="303.50" stroke="#2443b8" stroke-width="1.4"/>
<circle cx="350.20" cy="300.40" r="1.15" fill="#eef4ff" stroke="#333a4a" stroke-width="0.75"/>
<line x1="351.10" y1="301.30" x2="353.30" y2="303.50" stroke="#2443b8" stroke-width="1.4"/>
<circle cx="377.20" cy="300.40" r="1.15" fill="#eef4ff" stroke="#333a4a" stroke-width="0.75"/>
<line x1="378.10" y1="301.30" x2="380.30" y2="303.50" stroke="#2443b8" stroke-width="1.4"/>
<circle cx="422.00" cy="300.40" r="1.15" fill="#eef4ff" stroke="#333a4a" stroke-width="0.75"/>
<line x1="422.90" y1="301.30" x2="425.10" y2="303.50" stroke="#2443b8" stroke-width="1.4"/>
<circle cx="449.00" cy="300.40" r="1.15" fill="#eef4ff" stroke="#333a4a" stroke-width="0.75"/>
<line x1="449.90" y1="301.30" x2="452.10" y2="303.50" stroke="#2443b8" stroke-width="1.4"/>
<circle cx="494.10" cy="283.60" r="1.15" fill="#eef4ff" stroke="#333a4a" stroke-width="0.75"/>
<line x1="495.00" y1="284.50" x2="497.20" y2="286.70" stroke="#2443b8" stroke-width="1.4"/>
<path d="M493.20 299.70 H497.80 L496.15 301.90 V303.90 H494.85 V301.90 Z" fill="#2270dc"/>
<path d="M494.50 301.30 H496.50 L496.15 301.90 V303.90 H494.85 V301.90 Z" fill="#123c94"/>
<rect x="760" y="296.6" width="3" height="4.4" fill="#dfe8f4" stroke="#222" stroke-width="0.8"/>
<rect x="759.2" y="297.6" width="1.4" height="2.4" fill="#2a4fb0"/>
<path d="M797.5 476.5 L793.5 480.5 M797.5 478.5 L795.5 480.5" stroke="#bdbdbd" stroke-width="0.8"/>
<path d="M798 467 v2 h-1.8 v2 h-1.8" stroke="#ecdcd2" stroke-width="0.8" fill="none"/>
</svg>
<svg class="b" style="left:4px;top:3.4px" width="8" height="8" viewBox="0 0 8 8"><circle cx="3.7" cy="3.5" r="3.3" fill="#c2cc3a"/><circle cx="3.7" cy="3.5" r="3.1" fill="none" stroke="#5a6a20" stroke-width="0.5"/><path d="M1.6 1.8 L3.7 3.9 L5.8 1.8 M3.7 3.9 V6.4" stroke="#111" stroke-width="1.2" fill="none"/><circle cx="2.3" cy="4.6" r="0.6" fill="#111"/><circle cx="5.1" cy="4.6" r="0.6" fill="#111"/></svg>
<div class="t" style="top:3.60px;font-size:4.95px;line-height:8px;color:#111;left:13.40px;">t0_saisie_temps_passes_ct_sp</div>
<svg class="b" style="left:740px;top:0" width="60" height="14" viewBox="740 0 60 14"><line x1="746.2" y1="6.9" x2="750.8" y2="6.9" stroke="#444" stroke-width="0.8"/><rect x="766.4" y="4.4" width="4.5" height="4.5" rx="1" fill="none" stroke="#333" stroke-width="0.8"/><path d="M787 4.4 L791.5 9 M791.5 4.4 L787 9" stroke="#333" stroke-width="0.8" fill="none"/></svg>
<div class="b" style="left:783px;top:15px;width:15px;height:8px;background:#b5cdee;"></div>
<div class="b" style="left:794px;top:16px;width:2px;height:2px;background:#223;"></div>
<div class="b" style="left:12px;top:16px;width:36px;height:32px;background:#fff;"></div>
<svg class="b" style="left:12px;top:16px" width="36" height="32" viewBox="0 0 36 32"><path d="M2.6 27 L2.9 2.6 L31 1.8" stroke="#c9301c" stroke-width="2.1" fill="none"/><path d="M5.5 29.5 L31.6 29.9 L32.2 6" stroke="#c9301c" stroke-width="2.1" fill="none"/><circle cx="13.5" cy="7.3" r="1.6" fill="#111"/><path d="M7.5 17.5 Q13 11.5 21.5 10.8" stroke="#111" stroke-width="1.7" fill="none" stroke-linecap="round"/><path d="M11 23.5 Q15 18 22 16.6" stroke="#111" stroke-width="1.7" fill="none" stroke-linecap="round"/><text x="13.5" y="25.6" font-family="Liberation Sans, sans-serif" font-size="3.9" font-weight="bold" fill="#000" stroke="#000" stroke-width="0.15">MySmart</text></svg>
<div class="t" style="top:460.50px;font-size:5.0px;line-height:8px;color:#111;left:29.60px;transform:translateX(-50%);-webkit-text-stroke:0.05px;">Fermer</div>
<div class="b" style="left:69px;top:19px;width:76px;height:84px;border:1px solid #d9d9d9;border-radius:1.5px;"></div>
<div class="b" style="left:71.5px;top:15px;width:69px;height:8px;background:#fff;"></div>
<div class="t" style="top:15.30px;font-size:5.45px;line-height:8px;color:#222;left:72.50px;">Compétences - Affectations</div>
<div class="t" style="top:24.30px;font-size:5.45px;line-height:8px;color:#111;left:80.20px;">Chauffeur PL</div>
<div class="t" style="top:31.90px;font-size:5.45px;line-height:8px;color:#111;left:80.20px;">Conducteur d'engins</div>
<div class="t" style="top:39.50px;font-size:5.45px;line-height:8px;color:#111;left:80.20px;">Atelier</div>
<div class="t" style="top:47.10px;font-size:5.45px;line-height:8px;color:#111;left:80.20px;">Opérateur Nacelle</div>
<div class="t" style="top:54.70px;font-size:5.45px;line-height:8px;color:#111;left:80.20px;">Monteur</div>
<div class="t" style="top:92.70px;font-size:5.45px;line-height:8px;color:#111;left:80.20px;">Conducteur de travaux</div>
<div class="t" style="left:155.6px;top:18.0px;font-size:13.0px;line-height:18px;font-style:italic;color:#18188c;-webkit-text-stroke:0.35px;">Temps passés par contrat</div>
<div class="t" style="top:41.30px;font-size:5.5px;line-height:8px;color:#222;left:156.30px;">Magasin</div>
<div class="t" style="top:40.60px;font-size:5.1px;line-height:8px;color:#111;left:190.50px;-webkit-text-stroke:0.05px;">AGENCE LES GENETS</div>
<div class="t" style="top:54.40px;font-size:5.5px;line-height:8px;color:#222;left:156.70px;">Contrat</div>
<div class="t" style="top:53.60px;font-size:5.0px;line-height:8px;color:#111;letter-spacing:0.12px;left:190.80px;-webkit-text-stroke:0.05px;">BONAPPETIT</div>
<svg class="b" style="left:157.60px;top:73.90px" width="16" height="16" viewBox="0 0 16 16"><circle cx="8" cy="8" r="6.2" fill="#fff" stroke="#333a50" stroke-width="0.8"/><text x="8" y="11.6" text-anchor="middle" font-family="Liberation Sans, sans-serif" font-weight="bold" font-size="10.5" fill="#1f3068">?</text></svg>
<div class="t" style="top:88.60px;font-size:4.5px;line-height:8px;color:#111;left:165.60px;transform:translateX(-50%);-webkit-text-stroke:0.08px;">Requête</div>
<svg class="b" style="left:356.00px;top:53.30px" width="16" height="16" viewBox="0 0 16 16"><circle cx="8" cy="8" r="6.2" fill="#fff" stroke="#333a50" stroke-width="0.8"/><text x="8" y="11.6" text-anchor="middle" font-family="Liberation Sans, sans-serif" font-weight="bold" font-size="10.5" fill="#1f3068">?</text></svg>
<div class="t" style="top:67.90px;font-size:4.5px;line-height:8px;color:#111;left:364.00px;transform:translateX(-50%);-webkit-text-stroke:0.08px;">Contrat</div>
<div class="t" style="top:69.30px;font-size:5.55px;line-height:8px;color:#111;left:189.80px;">Contrat n°23010003 du 06/02/2023 au 20/02/2023</div>
<div class="t" style="top:75.80px;font-size:5.3px;line-height:8px;color:#111;left:189.80px;">Client : BONAPPETIT SARL&nbsp;&nbsp; WISSOUS</div>
<div class="t" style="top:82.40px;font-size:5.55px;line-height:8px;color:#111;left:189.80px;">Chantier :</div>
<div class="t" style="top:39.40px;font-size:5.5px;line-height:8px;color:#222;left:351.80px;">Du</div>
<div class="t" style="top:39.40px;font-size:5.5px;line-height:8px;color:#222;left:369.30px;">Lun 06/02/23</div>
<div class="b" style="left:368px;top:48px;width:49px;height:1px;background:#ebebeb;"></div>
<div class="t" style="top:39.40px;font-size:5.5px;line-height:8px;color:#222;left:442.60px;">au</div>
<div class="t" style="top:39.40px;font-size:5.5px;line-height:8px;color:#222;left:458.00px;">Dim 12/02/23</div>
<div class="b" style="left:456px;top:48px;width:48px;height:1px;background:#ebebeb;"></div>
<svg class="b" style="left:409.3px;top:38.6px" width="8" height="9" viewBox="0 0 8 9"><rect x="0.8" y="1.4" width="6" height="6.6" rx="0.8" fill="#eef5ff" stroke="#94bbe8" stroke-width="0.7"/><line x1="2" y1="0.6" x2="2" y2="2.2" stroke="#5588cc" stroke-width="0.7"/><line x1="5.6" y1="0.6" x2="5.6" y2="2.2" stroke="#5588cc" stroke-width="0.7"/><rect x="4" y="5" width="2.2" height="2.2" fill="#cfe0f6"/></svg>
<svg class="b" style="left:496.3px;top:38.6px" width="8" height="9" viewBox="0 0 8 9"><rect x="0.8" y="1.4" width="6" height="6.6" rx="0.8" fill="#eef5ff" stroke="#94bbe8" stroke-width="0.7"/><line x1="2" y1="0.6" x2="2" y2="2.2" stroke="#5588cc" stroke-width="0.7"/><line x1="5.6" y1="0.6" x2="5.6" y2="2.2" stroke="#5588cc" stroke-width="0.7"/><rect x="4" y="5" width="2.2" height="2.2" fill="#cfe0f6"/></svg>
<svg class="b" style="left:421px;top:36px" width="16" height="14" viewBox="0 0 16 14"><rect x="0.5" y="0.5" width="14.5" height="12.5" fill="#f5f5f5" stroke="#e2e2e2" stroke-width="0.7"/><path d="M1.6 6.8 L6.6 2 V11.6 Z" fill="#000"/><path d="M14 6.8 L9 2 V11.6 Z" fill="#000"/></svg>
<div class="t" style="top:48.60px;font-size:4.7px;line-height:8px;color:#222;left:383.20px;">Lundi</div>
<div class="t" style="top:48.60px;font-size:4.7px;line-height:8px;color:#222;left:469.60px;">Dimanche</div>
<div class="b" style="left:381px;top:60.5px;width:178px;height:18.5px;border:1px solid #dcdcdc;border-radius:1px;"></div>
<div class="b" style="left:384px;top:57px;width:166px;height:8px;background:#fff;"></div>
<div class="t" style="top:57.40px;font-size:5.38px;line-height:8px;color:#111;font-weight:bold;-webkit-text-stroke:0.03px;left:384.80px;">Lorsque des saisies sont déjà faites pour les salariés concernés</div>
<div class="t" style="top:66.60px;font-size:5.55px;line-height:8px;color:#111;left:393.00px;">Effacer les salariés non concernés par le chantier</div>
<div class="t" style="top:99.10px;font-size:5.75px;line-height:8px;color:#2b5cad;left:261.70px;transform:translateX(-50%);">Machine</div>
<div class="t" style="top:99.10px;font-size:5.7px;line-height:8px;color:#2b5cad;left:290.90px;">Quantité</div>
<div class="t" style="top:99.10px;font-size:5.75px;line-height:8px;color:#2b5cad;left:339.10px;transform:translateX(-50%);">Jour</div>
<div class="t" style="top:99.10px;font-size:5.75px;line-height:8px;color:#2b5cad;left:383.50px;transform:translateX(-50%);">jour h.supp</div>
<div class="t" style="top:99.10px;font-size:5.75px;line-height:8px;color:#2b5cad;left:428.25px;transform:translateX(-50%);">nuit</div>
<div class="t" style="top:99.10px;font-size:5.75px;line-height:8px;color:#2b5cad;left:454.70px;">nuit_h.supp</div>
<div class="t" style="top:99.10px;font-size:5.75px;line-height:8px;color:#2b5cad;left:511.90px;transform:translateX(-50%);">we_jf</div>
<div class="t" style="top:99.10px;font-size:5.75px;line-height:8px;color:#2b5cad;left:556.65px;transform:translateX(-50%);">we_jf_supp</div>
<div class="t" style="top:99.10px;font-size:5.75px;line-height:8px;color:#2b5cad;left:601.40px;transform:translateX(-50%);">immo</div>
<div class="t" style="top:99.10px;font-size:5.75px;line-height:8px;color:#2b5cad;left:646.20px;transform:translateX(-50%);">anders</div>
<div class="t" style="left:669.70px;top:99.1px;width:39.40px;height:8px;overflow:hidden;font-size:5.75px;line-height:8px;color:#2b5cad;"><span style="position:relative;left:-2.3px">prix_unit_remise</span></div>
<div class="t" style="top:99.10px;font-size:5.75px;line-height:8px;color:#2b5cad;left:735.55px;transform:translateX(-50%);">total</div>
<div class="t" style="top:112.40px;font-size:5.65px;line-height:8px;color:#000;font-weight:bold;-webkit-text-stroke:0.03px;left:237.20px;">2425</div>
<div class="t" style="top:112.40px;font-size:5.65px;line-height:8px;color:#000;font-weight:bold;-webkit-text-stroke:0.03px;right:485.00px;">1</div>
<div class="t" style="top:112.40px;font-size:5.65px;line-height:8px;color:#000;font-weight:bold;-webkit-text-stroke:0.03px;right:440.40px;">1 000,00 €</div>
<div class="t" style="top:112.40px;font-size:5.65px;line-height:8px;color:#000;font-weight:bold;-webkit-text-stroke:0.03px;right:88.50px;">900,00 €</div>
<div class="t" style="top:112.40px;font-size:5.65px;line-height:8px;color:#000;font-weight:bold;-webkit-text-stroke:0.03px;right:43.60px;">900,00 €</div>
<div class="t" style="top:248.50px;font-size:5.6px;line-height:8px;color:#111;left:228.90px;-webkit-text-stroke:0.06px;">Somme</div>
<div class="t" style="top:248.50px;font-size:5.6px;line-height:8px;color:#111;right:440.40px;-webkit-text-stroke:0.06px;">1 000,00 €</div>
<div class="t" style="top:248.50px;font-size:5.6px;line-height:8px;color:#111;right:395.80px;-webkit-text-stroke:0.06px;">0,00 €</div>
<div class="t" style="top:248.50px;font-size:5.6px;line-height:8px;color:#111;right:350.90px;-webkit-text-stroke:0.06px;">0,00 €</div>
<div class="t" style="top:248.50px;font-size:5.6px;line-height:8px;color:#111;right:312.20px;-webkit-text-stroke:0.06px;">0,00 €</div>
<div class="t" style="top:248.50px;font-size:5.6px;line-height:8px;color:#111;right:267.20px;-webkit-text-stroke:0.06px;">0,00 €</div>
<div class="t" style="top:248.50px;font-size:5.6px;line-height:8px;color:#111;right:222.70px;-webkit-text-stroke:0.06px;">0,00 €</div>
<div class="t" style="top:248.50px;font-size:5.6px;line-height:8px;color:#111;right:177.70px;-webkit-text-stroke:0.06px;">0,00 €</div>
<div class="t" style="top:248.50px;font-size:5.6px;line-height:8px;color:#111;right:133.10px;-webkit-text-stroke:0.06px;">0,00 €</div>
<div class="t" style="top:248.50px;font-size:5.6px;line-height:8px;color:#111;right:43.60px;-webkit-text-stroke:0.06px;">900,00 €</div>
<div class="t" style="top:123.60px;font-size:5.8px;line-height:8px;color:#2b5cad;left:147.00px;transform:translateX(-50%);">Heures Hommes</div>
<div class="t" style="top:137.90px;font-size:5.75px;line-height:8px;color:#2b5cad;left:79.20px;">Matricule</div>
<div class="t" style="top:137.90px;font-size:5.75px;line-height:8px;color:#2b5cad;left:144.80px;transform:translateX(-50%);">Salarié</div>
<div class="t" style="top:137.90px;font-size:5.75px;line-height:8px;color:#2b5cad;left:202.60px;transform:translateX(-50%);">Employeur</div>
<div class="t" style="top:151.60px;font-size:5.65px;line-height:8px;color:#111;font-weight:bold;-webkit-text-stroke:0.03px;left:75.80px;">10</div>
<div class="t" style="top:151.60px;font-size:5.65px;line-height:8px;color:#111;font-weight:bold;-webkit-text-stroke:0.03px;left:112.50px;">BARBAY ADRIEN</div>
<div class="t" style="top:165.50px;font-size:5.68px;line-height:8px;color:#111;left:75.80px;-webkit-text-stroke:0.06px;">11</div>
<div class="t" style="top:165.50px;font-size:5.68px;line-height:8px;color:#111;left:112.50px;-webkit-text-stroke:0.06px;">DJELLAL HABIB</div>
<div class="t" style="top:179.35px;font-size:5.68px;line-height:8px;color:#111;left:75.80px;-webkit-text-stroke:0.06px;">12</div>
<div class="t" style="top:179.35px;font-size:5.68px;line-height:8px;color:#111;left:112.50px;-webkit-text-stroke:0.06px;">DUPONT DANIEL</div>
<div class="t" style="top:179.35px;font-size:5.68px;line-height:8px;color:#111;left:183.20px;-webkit-text-stroke:0.06px;">HELLO</div>
<div class="t" style="top:193.20px;font-size:5.68px;line-height:8px;color:#111;left:75.80px;-webkit-text-stroke:0.06px;">13</div>
<div class="t" style="top:193.20px;font-size:5.68px;line-height:8px;color:#111;left:112.50px;-webkit-text-stroke:0.06px;">MARTIN CHRISTIAN</div>
<div class="t" style="top:207.05px;font-size:5.68px;line-height:8px;color:#111;left:75.80px;-webkit-text-stroke:0.06px;">15</div>
<div class="t" style="top:207.05px;font-size:5.68px;line-height:8px;color:#111;left:112.50px;-webkit-text-stroke:0.06px;">VERTBOIS FRANCOIS</div>
<div class="t" style="top:220.90px;font-size:5.68px;line-height:8px;color:#111;left:75.80px;-webkit-text-stroke:0.06px;">19</div>
<div class="t" style="top:220.90px;font-size:5.68px;line-height:8px;color:#111;left:112.50px;-webkit-text-stroke:0.06px;">BINGOIS ALAIN</div>
<div class="t" style="top:234.75px;font-size:5.68px;line-height:8px;color:#111;left:75.80px;-webkit-text-stroke:0.06px;">20</div>
<div class="t" style="top:234.75px;font-size:5.68px;line-height:8px;color:#111;left:112.50px;-webkit-text-stroke:0.06px;">THIEBAULT JEAN-PHILIP</div>
<div class="t" style="top:248.60px;font-size:5.68px;line-height:8px;color:#111;left:75.80px;-webkit-text-stroke:0.06px;">22</div>
<div class="t" style="top:248.60px;font-size:5.68px;line-height:8px;color:#111;left:112.50px;-webkit-text-stroke:0.06px;">SYNTEX ANTOINE</div>
<div class="t" style="top:248.60px;font-size:5.68px;line-height:8px;color:#111;left:183.20px;-webkit-text-stroke:0.06px;">JOBUOBA</div>
<div class="t" style="top:265.20px;font-size:4.75px;line-height:8px;color:#111;left:523.10px;transform:translateX(-50%);-webkit-text-stroke:0.04px;">Test de facturation</div>
<div class="t" style="top:265.20px;font-size:4.75px;line-height:8px;color:#111;left:580.50px;transform:translateX(-50%);-webkit-text-stroke:0.04px;">Efface table facturation</div>
<div class="t" style="top:460.35px;font-size:4.75px;line-height:8px;color:#111;left:220.30px;transform:translateX(-50%);-webkit-text-stroke:0.04px;">Efface la ligne</div>
<div class="t" style="top:460.35px;font-size:4.75px;line-height:8px;color:#111;left:290.30px;transform:translateX(-50%);-webkit-text-stroke:0.04px;">Efface toutes les lignes</div>
<div class="t" style="top:453.90px;font-size:4.72px;line-height:8px;color:#111;left:504.60px;transform:translateX(-50%);-webkit-text-stroke:0.04px;">Sauve les heures saisies</div>
<div class="t" style="top:459.80px;font-size:4.72px;line-height:8px;color:#111;left:504.60px;transform:translateX(-50%);-webkit-text-stroke:0.04px;">(Hommes et machines)</div>
<div class="t" style="top:286.60px;font-size:5.75px;line-height:8px;color:#2b5cad;left:117.30px;transform:translateX(-50%);">Heures Machines</div>
<div class="t" style="top:303.60px;font-size:5.75px;line-height:8px;color:#2b5cad;left:94.00px;transform:translateX(-50%);">Référence</div>
<div class="t" style="top:303.60px;font-size:5.75px;line-height:8px;color:#2b5cad;left:140.60px;transform:translateX(-50%);">Code Parc</div>
<div class="t" style="top:303.60px;font-size:5.75px;line-height:8px;color:#2b5cad;left:186.80px;transform:translateX(-50%);">Tarif jour</div>
<div class="t" style="top:303.60px;font-size:5.75px;line-height:8px;color:#2b5cad;left:222.65px;transform:translateX(-50%);">Remise</div>
<div class="t" style="top:303.60px;font-size:5.75px;line-height:8px;color:#2b5cad;left:258.15px;transform:translateX(-50%);">Tarif Nuit</div>
<div class="t" style="top:303.60px;font-size:5.75px;line-height:8px;color:#2b5cad;left:294.10px;transform:translateX(-50%);">Remise</div>
<div class="t" style="top:300.00px;font-size:5.75px;line-height:8px;color:#2b5cad;left:330.30px;transform:translateX(-50%);">Week end</div>
<div class="t" style="top:307.20px;font-size:5.75px;line-height:8px;color:#2b5cad;left:330.30px;transform:translateX(-50%);">Férié</div>
<div class="t" style="top:303.60px;font-size:5.75px;line-height:8px;color:#2b5cad;left:365.80px;transform:translateX(-50%);">Remise</div>
<div class="t" style="top:303.60px;font-size:5.75px;line-height:8px;color:#2b5cad;left:401.70px;transform:translateX(-50%);">Tarif Immo</div>
<div class="t" style="top:303.60px;font-size:5.75px;line-height:8px;color:#2b5cad;left:437.60px;transform:translateX(-50%);">Remise</div>
<div class="t" style="top:303.60px;font-size:5.75px;line-height:8px;color:#2b5cad;left:473.05px;transform:translateX(-50%);">Conducteurs</div>
<div class="t" style="top:283.00px;font-size:5.75px;line-height:8px;color:#2b5cad;left:515.99px;transform:translateX(-50%);">Lundi</div>
<div class="t" style="top:290.20px;font-size:5.75px;line-height:8px;color:#2b5cad;left:515.99px;transform:translateX(-50%);">06 Fév.</div>
<div class="t" style="top:303.60px;font-size:5.75px;line-height:8px;color:#2b5cad;left:507.05px;transform:translateX(-50%);">Jour</div>
<div class="t" style="top:303.60px;font-size:5.75px;line-height:8px;color:#2b5cad;left:524.94px;transform:translateX(-50%);">Nuit</div>
<div class="t" style="top:283.00px;font-size:5.75px;line-height:8px;color:#2b5cad;left:551.78px;transform:translateX(-50%);">Mardi</div>
<div class="t" style="top:290.20px;font-size:5.75px;line-height:8px;color:#2b5cad;left:551.78px;transform:translateX(-50%);">07 Fév.</div>
<div class="t" style="top:303.60px;font-size:5.75px;line-height:8px;color:#2b5cad;left:542.83px;transform:translateX(-50%);">Jour</div>
<div class="t" style="top:303.60px;font-size:5.75px;line-height:8px;color:#2b5cad;left:560.73px;transform:translateX(-50%);">Nuit</div>
<div class="t" style="top:283.00px;font-size:5.75px;line-height:8px;color:#2b5cad;left:587.56px;transform:translateX(-50%);">Mercredi</div>
<div class="t" style="top:290.20px;font-size:5.75px;line-height:8px;color:#2b5cad;left:587.56px;transform:translateX(-50%);">08 Fév.</div>
<div class="t" style="top:303.60px;font-size:5.75px;line-height:8px;color:#2b5cad;left:578.62px;transform:translateX(-50%);">Jour</div>
<div class="t" style="top:303.60px;font-size:5.75px;line-height:8px;color:#2b5cad;left:596.51px;transform:translateX(-50%);">Nuit</div>
<div class="t" style="top:283.00px;font-size:5.75px;line-height:8px;color:#2b5cad;left:623.35px;transform:translateX(-50%);">Jeudi</div>
<div class="t" style="top:290.20px;font-size:5.75px;line-height:8px;color:#2b5cad;left:623.35px;transform:translateX(-50%);">09 Fév.</div>
<div class="t" style="top:303.60px;font-size:5.75px;line-height:8px;color:#2b5cad;left:614.40px;transform:translateX(-50%);">Jour</div>
<div class="t" style="top:303.60px;font-size:5.75px;line-height:8px;color:#2b5cad;left:632.30px;transform:translateX(-50%);">Nuit</div>
<div class="t" style="top:283.00px;font-size:5.75px;line-height:8px;color:#2b5cad;left:659.14px;transform:translateX(-50%);">Vendredi</div>
<div class="t" style="top:290.20px;font-size:5.75px;line-height:8px;color:#2b5cad;left:659.14px;transform:translateX(-50%);">10 Fév.</div>
<div class="t" style="top:303.60px;font-size:5.75px;line-height:8px;color:#2b5cad;left:650.19px;transform:translateX(-50%);">Jour</div>
<div class="t" style="top:303.60px;font-size:5.75px;line-height:8px;color:#2b5cad;left:668.08px;transform:translateX(-50%);">Nuit</div>
<div class="t" style="top:283.00px;font-size:5.75px;line-height:8px;color:#2b5cad;left:694.92px;transform:translateX(-50%);">Samedi</div>
<div class="t" style="top:290.20px;font-size:5.75px;line-height:8px;color:#2b5cad;left:694.92px;transform:translateX(-50%);">11 Fév.</div>
<div class="t" style="top:303.60px;font-size:5.75px;line-height:8px;color:#2b5cad;left:685.98px;transform:translateX(-50%);">Jour</div>
<div class="t" style="top:303.60px;font-size:5.75px;line-height:8px;color:#2b5cad;left:703.87px;transform:translateX(-50%);">Nuit</div>
<div class="t" style="top:283.00px;font-size:5.75px;line-height:8px;color:#2b5cad;left:730.71px;transform:translateX(-50%);">Dimanche</div>
<div class="t" style="top:290.20px;font-size:5.75px;line-height:8px;color:#2b5cad;left:730.71px;transform:translateX(-50%);">12 Fév.</div>
<div class="t" style="top:303.60px;font-size:5.75px;line-height:8px;color:#2b5cad;left:721.76px;transform:translateX(-50%);">Jour</div>
<div class="t" style="top:303.60px;font-size:5.75px;line-height:8px;color:#2b5cad;left:739.65px;transform:translateX(-50%);">Nuit</div>
<div class="t" style="top:318.80px;font-size:5.65px;line-height:8px;color:#000;font-weight:bold;-webkit-text-stroke:0.03px;left:75.80px;">PELLERR</div>
<div class="t" style="top:318.80px;font-size:5.65px;line-height:8px;color:#000;font-weight:bold;-webkit-text-stroke:0.03px;left:121.50px;">2425</div>
<div class="t" style="top:318.80px;font-size:5.65px;line-height:8px;color:#000;font-weight:bold;-webkit-text-stroke:0.03px;right:590.40px;">1 000,00 €</div>
<div class="t" style="top:318.80px;font-size:5.65px;line-height:8px;color:#000;font-weight:bold;-webkit-text-stroke:0.03px;left:225.15px;transform:translateX(-50%);">10</div>
<div class="t" style="top:318.80px;font-size:5.65px;line-height:8px;color:#000;font-weight:bold;-webkit-text-stroke:0.03px;right:519.40px;">1 100,00 €</div>
<div class="t" style="top:318.80px;font-size:5.65px;line-height:8px;color:#000;font-weight:bold;-webkit-text-stroke:0.03px;left:296.60px;transform:translateX(-50%);">10</div>
<div class="t" style="top:318.80px;font-size:5.65px;line-height:8px;color:#000;font-weight:bold;-webkit-text-stroke:0.03px;right:447.60px;">1 200,00 €</div>
<div class="t" style="top:318.80px;font-size:5.65px;line-height:8px;color:#000;font-weight:bold;-webkit-text-stroke:0.03px;left:368.30px;transform:translateX(-50%);">10</div>
<div class="t" style="top:318.80px;font-size:5.65px;line-height:8px;color:#000;font-weight:bold;-webkit-text-stroke:0.03px;right:375.80px;">500,00 €</div>
<div class="t" style="top:318.80px;font-size:5.65px;line-height:8px;color:#000;font-weight:bold;-webkit-text-stroke:0.03px;left:440.10px;transform:translateX(-50%);">10</div>
<div class="t" style="top:318.80px;font-size:5.65px;line-height:8px;color:#000;font-weight:bold;-webkit-text-stroke:0.03px;left:507.05px;transform:translateX(-50%);">1</div>
</body></html>
